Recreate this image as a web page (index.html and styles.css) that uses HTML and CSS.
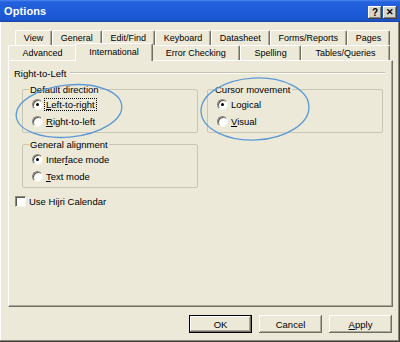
FILE: index.html
```html
<!DOCTYPE html>
<html>
<head>
<meta charset="utf-8">
<title>Options</title>
<link rel="stylesheet" href="styles.css">
</head>
<body>
<div class="window">
  <div class="titlebar">
    <span class="title">Options</span>
    <div class="ctrls">
      <span class="cbtn">?</span>
      <span class="cbtn close">&#x2715;</span>
    </div>
  </div>

  <div class="tabs">
    <div class="tabrow row1">
      <div class="tab">View</div>
      <div class="tab">General</div>
      <div class="tab">Edit/Find</div>
      <div class="tab">Keyboard</div>
      <div class="tab">Datasheet</div>
      <div class="tab">Forms/Reports</div>
      <div class="tab">Pages</div>
    </div>
    <div class="tabrow row2">
      <div class="tab">Advanced</div>
      <div class="tab sel">International</div>
      <div class="tab">Error Checking</div>
      <div class="tab">Spelling</div>
      <div class="tab">Tables/Queries</div>
    </div>
  </div>

  <div class="panel">
    <div class="seclabel"><span>Right-to-Left</span><i class="rule"></i></div>
    <div class="groups">
      <div class="col">
        <fieldset class="grp">
          <legend>Default direction</legend>
          <div class="opt"><span class="radio on"></span><span class="focus"><u>L</u>eft-to-right</span></div>
          <div class="opt"><span class="radio"></span><span class="txt"><u>R</u>ight-to-left</span></div>
        </fieldset>
        <fieldset class="grp">
          <legend>General alignment</legend>
          <div class="opt"><span class="radio on"></span><span class="txt">Inter<u>f</u>ace mode</span></div>
          <div class="opt"><span class="radio"></span><span class="txt"><u>T</u>ext mode</span></div>
        </fieldset>
      </div>
      <div class="col">
        <fieldset class="grp">
          <legend>Cursor movement</legend>
          <div class="opt"><span class="radio on"></span><span class="txt">Logical</span></div>
          <div class="opt"><span class="radio"></span><span class="txt"><u>V</u>isual</span></div>
        </fieldset>
      </div>
    </div>
    <div class="chkrow"><span class="checkbox"></span><span>Use Hi<u>j</u>ri Calendar</span></div>
  </div>

  <div class="buttons">
    <div class="btn default">OK</div>
    <div class="btn">Cancel</div>
    <div class="btn"><u>A</u>pply</div>
  </div>

  <svg class="annot" width="400" height="342" viewBox="0 0 400 342">
    <ellipse cx="69" cy="111" rx="53" ry="26" transform="rotate(-6 69 111)"></ellipse>
    <ellipse cx="255" cy="109" rx="54" ry="31" transform="rotate(-3 255 109)"></ellipse>
  </svg>
</div>
</body>
</html>
```
FILE: styles.css
```css
html, body {
  margin: 0;
  padding: 0;
}
body {
  width: 400px;
  height: 342px;
  overflow: hidden;
  background: #ECE9D8;
  font-family: "Liberation Sans", Arial, sans-serif;
  font-size: 9.5px;
  color: #000;
}
.window {
  position: relative;
  width: 400px;
  height: 342px;
  box-sizing: border-box;
  display: flex;
  flex-direction: column;
  box-shadow: inset -1px -1px #404040, inset -2px -2px #8a877a, inset 1px 0 #fff;
}
.titlebar {
  height: 22px;
  flex: none;
  display: flex;
  align-items: center;
  padding: 0 3px 0 4px;
  background: linear-gradient(#4a86f0 0, #2461dc 2px, #1d5bd9 12px, #1b55cf 20px, #16449e 22px);
}
.title {
  flex: 1;
  color: #fff;
  font-weight: bold;
  font-size: 11px;
  letter-spacing: 0.1px;
}
.ctrls {
  display: flex;
  gap: 1px;
  margin-top: 3px;
}
.cbtn {
  width: 14px;
  height: 13px;
  box-sizing: border-box;
  background: #d8d5cb;
  box-shadow: inset -1px -1px #404040, inset 1px 1px #fff, inset -2px -2px #808080;
  display: flex;
  align-items: center;
  justify-content: center;
  font-weight: bold;
  font-size: 10px;
  line-height: 1;
}
.cbtn.close {
  font-size: 9px;
}

.tabs {
  flex: none;
  padding-top: 8px;
  display: flex;
  flex-direction: column;
}
.tabrow {
  display: flex;
  height: 15px;
}
.row1 {
  margin-left: 15px;
  width: 375px;
}
.row2 {
  margin-left: 8px;
  width: 382px;
  position: relative;
  z-index: 2;
}
.tab {
  flex: 1 1 auto;
  min-width: 0;
  box-sizing: border-box;
  padding: 0 2px;
  text-align: center;
  white-space: nowrap;
  font-size: 9px;
  line-height: 14px;
  background: #ECE9D8;
  border-top: 1px solid #fff;
  border-left: 1px solid #fff;
  border-right: 1px solid #716f64;
  border-radius: 2px 2px 0 0;
  box-shadow: inset -1px 0 #aca899;
}
.tab.sel {
  position: relative;
  z-index: 3;
  height: 18px;
  margin: -2px -2px -1px -2px;
  line-height: 14px;
  padding-top: 1px;
}

.panel {
  flex: none;
  margin-left: 8px;
  width: 385px;
  height: 247px;
  box-sizing: border-box;
  border: 1px solid;
  border-color: #fff #716f64 #716f64 #fff;
  box-shadow: inset -1px -1px #aca899;
  padding: 6px 0 0 5px;
  display: flex;
  flex-direction: column;
}
.seclabel {
  display: flex;
  align-items: center;
  height: 12px;
}
.rule {
  flex: 1;
  height: 0;
  border-top: 1px solid #c5c2b2;
  border-bottom: 1px solid #fff;
  margin: 0 7px 0 4px;
}
.groups {
  display: flex;
  gap: 9px;
  margin: 5px 0 0 8px;
}
.col {
  display: flex;
  flex-direction: column;
  gap: 6px;
  width: 176px;
}
.grp {
  margin: 0;
  padding: 1px 6px 2px 9px;
  border: 1px solid #c9c6b6;
  border-radius: 2px;
  min-width: 0;
  box-sizing: border-box;
  width: 176px;
}
.grp legend {
  padding: 0 1px;
  margin-left: -3px;
  line-height: 11px;
}
.opt {
  display: flex;
  align-items: center;
  height: 17px;
}
.radio {
  position: relative;
  flex: none;
  width: 11px;
  height: 11px;
  box-sizing: border-box;
  border-radius: 50%;
  background: #fff;
  border: 1px solid;
  border-color: #8c8a80 #f4f3ee #f4f3ee #8c8a80;
  box-shadow: inset 1px 1px #5a5850;
  margin-right: 2px;
}
.radio.on::after {
  content: "";
  position: absolute;
  left: 3px;
  top: 3px;
  width: 3px;
  height: 3px;
  border-radius: 50%;
  background: #000;
}
.txt {
  padding: 0 1px;
}
.focus {
  padding: 0 1px;
  outline: 1px dotted #000;
  line-height: 11px;
}
.chkrow {
  display: flex;
  align-items: center;
  height: 13px;
  margin: 7px 0 0 1px;
}
.checkbox {
  flex: none;
  width: 11px;
  height: 11px;
  box-sizing: border-box;
  background: #fff;
  border: 1px solid;
  border-color: #8c8a80 #f4f3ee #f4f3ee #8c8a80;
  box-shadow: inset 1px 1px #5a5850;
  margin-right: 3px;
}

.buttons {
  flex: none;
  display: flex;
  justify-content: flex-end;
  gap: 7px;
  margin: 8px 8px 0 0;
}
.btn {
  width: 63px;
  height: 18px;
  box-sizing: border-box;
  display: flex;
  align-items: center;
  justify-content: center;
  background: #ECE9D8;
  box-shadow: inset -1px -1px #716f64, inset 1px 1px #fff, inset -2px -2px #aca899;
}
.btn.default {
  border: 1px solid #000;
  box-shadow: inset -1px -1px #716f64, inset 1px 1px #fff, inset -2px -2px #aca899;
}

.annot {
  position: absolute;
  left: 0;
  top: 0;
  pointer-events: none;
}
.annot ellipse {
  fill: none;
  stroke: #5b9ad4;
  stroke-width: 1.3;
}
```
